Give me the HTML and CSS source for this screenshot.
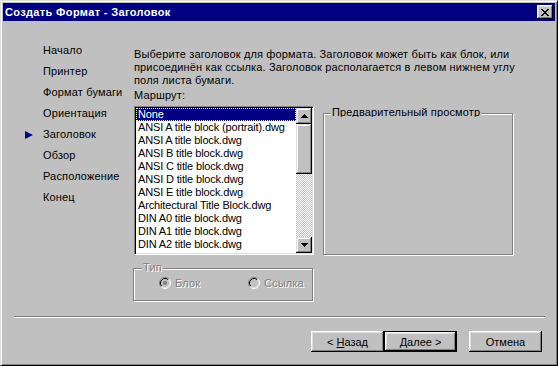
FILE: index.html
```html
<!DOCTYPE html>
<html lang="ru">
<head>
    <meta charset="UTF-8">
    <title>Создать Формат - Заголовок</title>
    <link rel="stylesheet" href="styles.css">
</head>
<body>
    <div class="window">
        <div class="titlebar">
            <span class="title">Создать Формат - Заголовок</span>
            <button class="close">
                <svg width="8" height="7" viewBox="0 0 8 7" shape-rendering="crispEdges">
                    <path d="M0 0h2v1H0zM6 0h2v1H6zM1 1h2v1H1zM5 1h2v1H5zM2 2h4v1H2zM3 3h2v1H3zM2 4h4v1H2zM1 5h2v1H1zM5 5h2v1H5zM0 6h2v1H0zM6 6h2v1H6z" fill="#000"/>
                </svg>
            </button>
        </div>

        <div class="main">
            <ul class="steps">
                <li><span class="marker"></span>Начало</li>
                <li><span class="marker"></span>Принтер</li>
                <li><span class="marker"></span>Формат бумаги</li>
                <li><span class="marker"></span>Ориентация</li>
                <li class="active">
                    <span class="marker">
                        <svg width="8" height="8" viewBox="0 0 8 8"><polygon points="0,0 8,4 0,8" fill="#000080"/></svg>
                    </span>Заголовок
                </li>
                <li><span class="marker"></span>Обзор</li>
                <li><span class="marker"></span>Расположение</li>
                <li><span class="marker"></span>Конец</li>
            </ul>

            <div class="page">
                <p class="intro">Выберите заголовок для формата. Заголовок может быть как блок, или<br>присоединён как ссылка. Заголовок располагается в левом нижнем углу<br>поля листа бумаги.</p>
                <div class="route-label">Маршрут:</div>

                <div class="row">
                    <div class="listbox">
                        <ul class="items">
                            <li class="selected">None</li>
                            <li>ANSI A title block (portrait).dwg</li>
                            <li>ANSI A title block.dwg</li>
                            <li>ANSI B title block.dwg</li>
                            <li>ANSI C title block.dwg</li>
                            <li>ANSI D title block.dwg</li>
                            <li>ANSI E title block.dwg</li>
                            <li>Architectural Title Block.dwg</li>
                            <li>DIN A0 title block.dwg</li>
                            <li>DIN A1 title block.dwg</li>
                            <li>DIN A2 title block.dwg</li>
                            <li>DIN A3 title block.dwg</li>
                        </ul>
                        <div class="scrollbar">
                            <div class="sb-btn">
                                <svg width="7" height="4" viewBox="0 0 7 4" shape-rendering="crispEdges"><path d="M3 0h1v1H3zM2 1h3v1H2zM1 2h5v1H1zM0 3h7v1H0z" fill="#000"/></svg>
                            </div>
                            <div class="sb-btn thumb"></div>
                            <div class="sb-track"></div>
                            <div class="sb-btn">
                                <svg width="7" height="4" viewBox="0 0 7 4" shape-rendering="crispEdges"><path d="M0 0h7v1H0zM1 1h5v1H1zM2 2h3v1H2zM3 3h1v1H3z" fill="#000"/></svg>
                            </div>
                        </div>
                    </div>

                    <div class="group preview">
                        <span class="group-label">Предварительный просмотр</span>
                    </div>
                </div>

                <div class="group type">
                    <span class="group-label disabled">Тип</span>
                    <div class="radios">
                        <label class="radio">
                            <svg width="12" height="12" viewBox="0 0 12 12">
                                <circle cx="6" cy="6" r="4.5" fill="#c0c0c0"/>
                                <path d="M2.11 9.89A5.5 5.5 0 0 1 9.89 2.11" stroke="#808080" fill="none"/>
                                <path d="M9.89 2.11A5.5 5.5 0 0 1 2.11 9.89" stroke="#fff" fill="none"/>
                                <path d="M2.82 9.18A4.5 4.5 0 0 1 9.18 2.82" stroke="#000" fill="none"/>
                                <path d="M9.18 2.82A4.5 4.5 0 0 1 2.82 9.18" stroke="#dfdfdf" fill="none"/>
                                <circle cx="6" cy="6" r="2" fill="#808080"/>
                            </svg>
                            <span class="disabled">Блок</span>
                        </label>
                        <label class="radio">
                            <svg width="12" height="12" viewBox="0 0 12 12">
                                <circle cx="6" cy="6" r="4.5" fill="#c0c0c0"/>
                                <path d="M2.11 9.89A5.5 5.5 0 0 1 9.89 2.11" stroke="#808080" fill="none"/>
                                <path d="M9.89 2.11A5.5 5.5 0 0 1 2.11 9.89" stroke="#fff" fill="none"/>
                                <path d="M2.82 9.18A4.5 4.5 0 0 1 9.18 2.82" stroke="#000" fill="none"/>
                                <path d="M9.18 2.82A4.5 4.5 0 0 1 2.82 9.18" stroke="#dfdfdf" fill="none"/>
                            </svg>
                            <span class="disabled">Ссылка</span>
                        </label>
                    </div>
                </div>
            </div>
        </div>

        <div class="separator"></div>

        <div class="buttons">
            <button class="btn">&lt; <u>Н</u>азад</button>
            <button class="btn default">Далее &gt;</button>
            <button class="btn cancel">Отмена</button>
        </div>
    </div>
</body>
</html>
```

FILE: styles.css
```css
* {
    box-sizing: border-box;
}
body {
    margin: 0;
    font-family: "Liberation Sans", Arial, sans-serif;
    font-size: 11px;
    letter-spacing: 0.15px;
    color: #000;
    background-color: #c0c0c0;
}
.window {
    width: 558px;
    height: 366px;
    background-color: #c0c0c0;
    border: 1px solid;
    border-color: #dfdfdf #000 #000 #dfdfdf;
    box-shadow: inset 1px 1px #fff, inset -1px -1px #808080;
    padding: 2px;
    display: flex;
    flex-direction: column;
}
.titlebar {
    height: 18px;
    background-color: #000080;
    display: flex;
    align-items: center;
    justify-content: space-between;
    padding: 0 2px;
}
.title {
    color: #fff;
    font-weight: bold;
    letter-spacing: 0.35px;
}
.close {
    width: 16px;
    height: 14px;
    padding: 0;
    border: none;
    background-color: #c0c0c0;
    box-shadow: inset -1px -1px #000, inset 1px 1px #fff, inset -2px -2px #808080, inset 2px 2px #dfdfdf;
    display: flex;
    align-items: center;
    justify-content: center;
}

.main {
    display: flex;
}
.steps {
    list-style: none;
    margin: 19px 0 0;
    padding: 0 0 0 22px;
    width: 131px;
    line-height: 21px;
}
.steps li {
    display: flex;
    align-items: center;
    white-space: nowrap;
}
.marker {
    width: 18px;
    height: 21px;
    display: flex;
    align-items: center;
}

.page {
    padding-top: 27px;
}
.intro {
    margin: 0;
    line-height: 13px;
    white-space: nowrap;
}
.route-label {
    margin-top: 2px;
    line-height: 13px;
}
.row {
    display: flex;
    align-items: flex-start;
    margin-top: 4px;
}

.listbox {
    width: 180px;
    height: 149px;
    border: 1px solid;
    border-color: #808080 #fff #fff #808080;
    box-shadow: inset 1px 1px #000, inset -1px -1px #dfdfdf;
    padding: 1px;
    background-color: #fff;
    display: flex;
}
.items {
    list-style: none;
    margin: 0;
    padding: 0;
    flex: 1;
    height: 145px;
    overflow: hidden;
    font-size: 11px;
    letter-spacing: -0.15px;
    line-height: 13px;
}
.items li {
    height: 13px;
    padding-left: 2px;
    white-space: nowrap;
}
.items li.selected {
    background-color: #000080;
    color: #fff;
    outline: 1px dotted #ffff80;
    outline-offset: -1px;
}
.scrollbar {
    width: 16px;
    display: flex;
    flex-direction: column;
    background: repeating-conic-gradient(#c0c0c0 0 25%, #fff 0 50%) 0 0 / 2px 2px;
}
.sb-btn {
    width: 16px;
    height: 16px;
    background-color: #c0c0c0;
    box-shadow: inset -1px -1px #000, inset 1px 1px #dfdfdf, inset -2px -2px #808080, inset 2px 2px #fff;
    display: flex;
    align-items: center;
    justify-content: center;
}
.sb-btn.thumb {
    height: 50px;
}
.sb-track {
    flex: 1;
}

.group {
    position: relative;
    border: 1px solid #808080;
    box-shadow: inset 1px 1px #fff, 1px 1px #fff;
}
.group-label {
    position: absolute;
    left: 7px;
    top: -7px;
    padding: 0 1px;
    background-color: #c0c0c0;
    line-height: 11px;
    height: 10px;
    overflow: hidden;
    white-space: nowrap;
}
.preview {
    width: 190px;
    height: 142px;
    margin-left: 9px;
    margin-top: 7px;
}
.type {
    width: 180px;
    height: 33px;
    margin-top: 13px;
    margin-left: -1px;
}
.type .group-label {
    left: 8px;
}
.disabled {
    color: #808080;
    text-shadow: 1px 1px 0 #fff;
}
.radios {
    display: flex;
    padding: 8px 0 0 25px;
}
.radio {
    display: flex;
    align-items: center;
    gap: 4px;
    height: 12px;
    line-height: 12px;
}
.radio:first-child {
    width: 89px;
}

.separator {
    margin: 15px 10px 0 11px;
    height: 2px;
    border-top: 1px solid #808080;
    border-bottom: 1px solid #fff;
}
.buttons {
    display: flex;
    justify-content: flex-end;
    margin-top: 13px;
    padding-right: 13px;
}
.btn {
    width: 73px;
    height: 21px;
    padding: 0;
    border: none;
    font: inherit;
    color: #000;
    background-color: #c0c0c0;
    box-shadow: inset -1px -1px #000, inset 1px 1px #fff, inset -2px -2px #808080, inset 2px 2px #dfdfdf;
}
.btn.default {
    box-shadow: inset 0 0 0 1px #000, inset -2px -2px #000, inset 2px 2px #fff, inset -3px -3px #808080, inset 3px 3px #dfdfdf;
}
.btn.cancel {
    margin-left: 12px;
}
```
